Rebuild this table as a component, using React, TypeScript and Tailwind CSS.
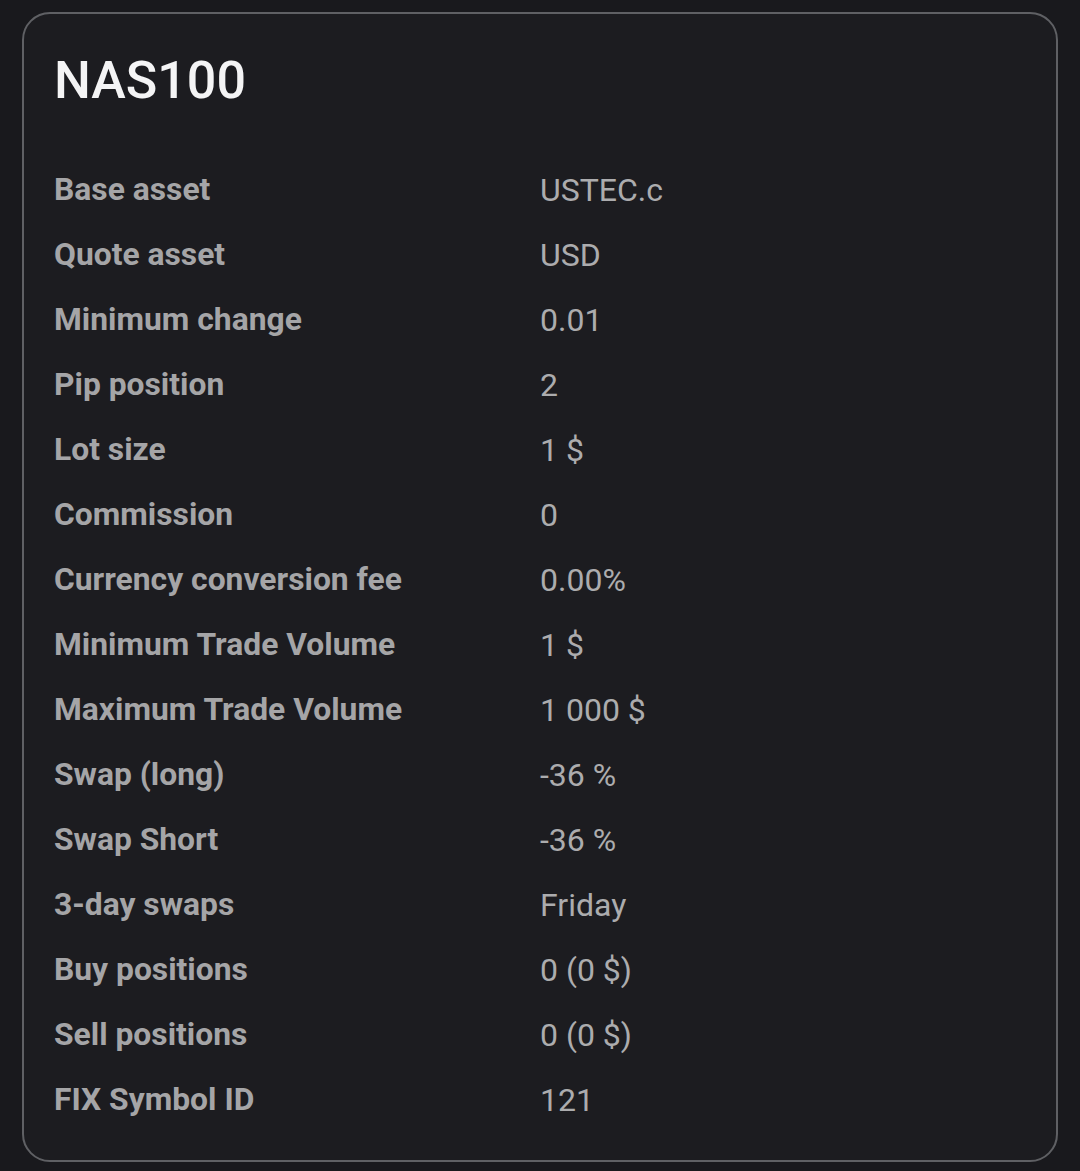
const rows: [string, string][] = [
  ["Base asset", "USTEC.c"],
  ["Quote asset", "USD"],
  ["Minimum change", "0.01"],
  ["Pip position", "2"],
  ["Lot size", "1 $"],
  ["Commission", "0"],
  ["Currency conversion fee", "0.00%"],
  ["Minimum Trade Volume", "1 $"],
  ["Maximum Trade Volume", "1 000 $"],
  ["Swap (long)", "-36 %"],
  ["Swap Short", "-36 %"],
  ["3-day swaps", "Friday"],
  ["Buy positions", "0 (0 $)"],
  ["Sell positions", "0 (0 $)"],
  ["FIX Symbol ID", "121"],
];

export default function App() {
  return (
    <div className="min-h-[1171px] bg-[#19191d] pt-[12px] pl-[22px] pr-[22px] font-['Roboto',sans-serif]">
      <div className="w-[1036px] h-[1150px] rounded-[28px] border-2 border-[#5f6064] bg-[#1c1c20] pl-[30px] pt-[37px]">
        <h1 className="text-[52px] leading-[60px] font-medium text-[#f4f4f5]">NAS100</h1>
        <div className="mt-[46px] grid grid-cols-[486px_1fr]">
          {rows.map(([label, value]) => (
            <div key={label} className="contents">
              <div className="h-[65px] flex items-center text-[31.8px] font-bold text-[#a5a5a7]">{label}</div>
              <div className="h-[65px] flex items-center text-[32px] text-[#acacae]">{value}</div>
            </div>
          ))}
        </div>
      </div>
    </div>
  );
}
